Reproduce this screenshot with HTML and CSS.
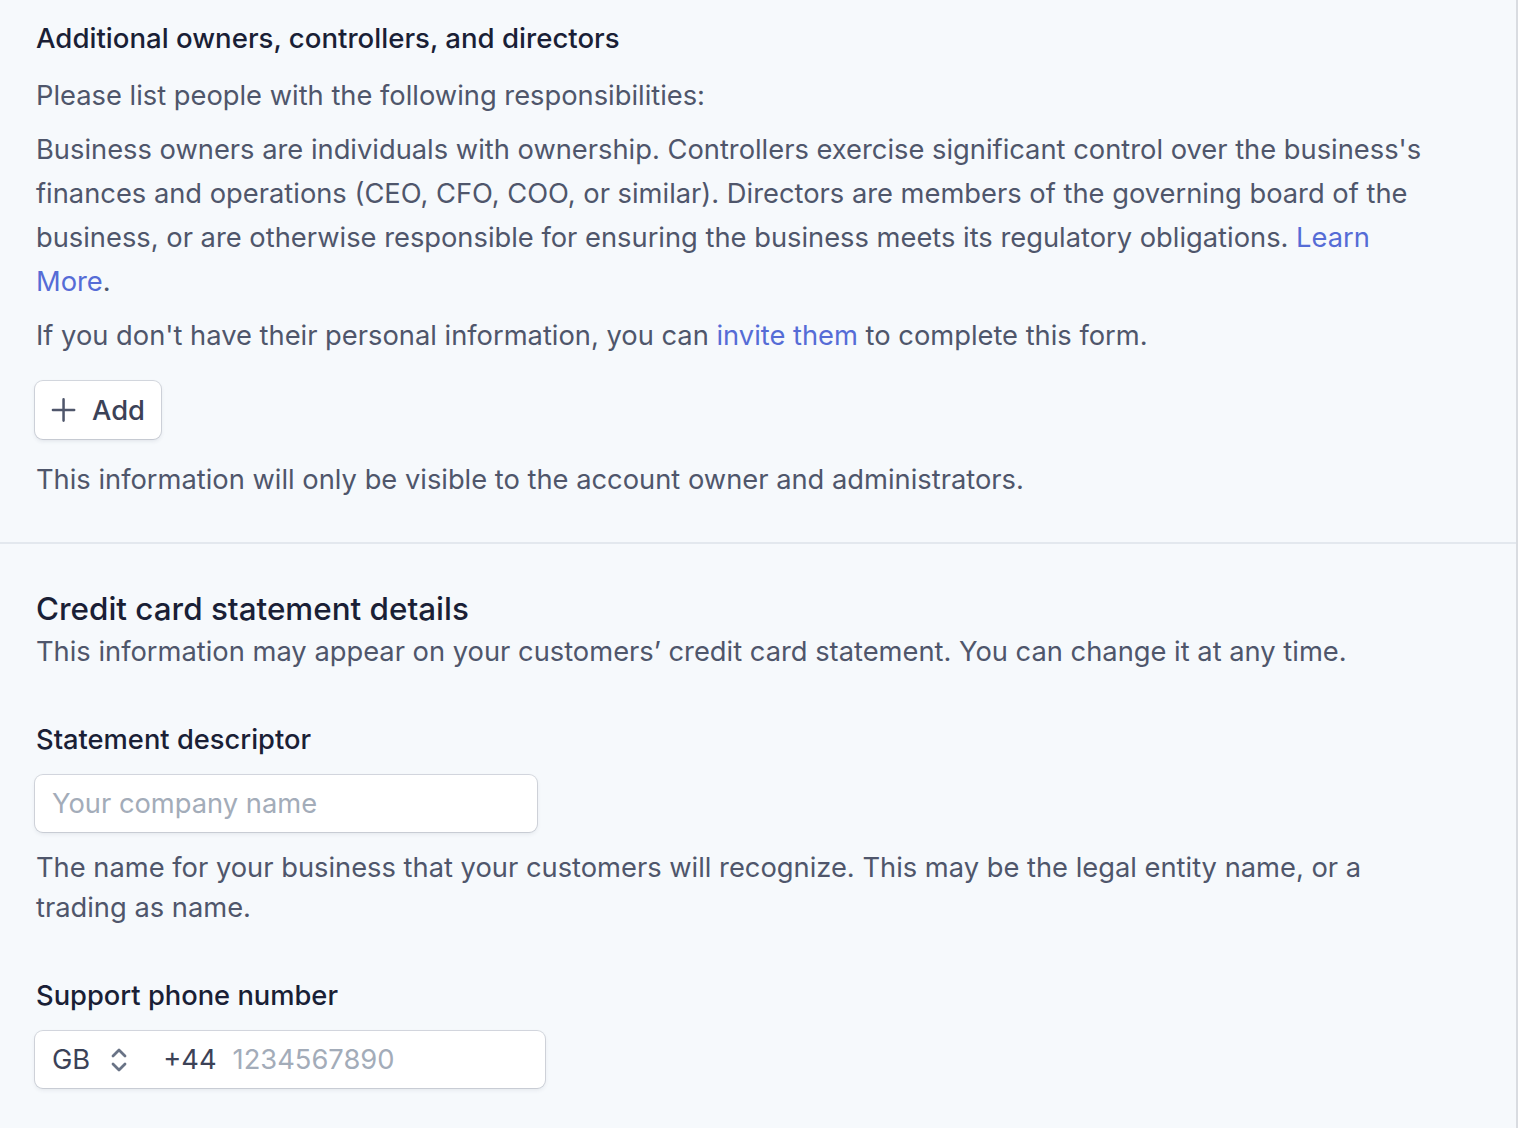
FILE: index.html
```html
<!DOCTYPE html>
<html lang="en">
<head>
<meta charset="utf-8">
<title>Account details</title>
<link rel="stylesheet" href="styles.css">
</head>
<body>
<div class="page">
  <section class="section owners">
    <h2 class="title">Additional owners, controllers, and directors</h2>
    <p class="text first">Please list people with the following responsibilities:</p>
    <p class="text">Business owners are individuals with ownership. Controllers exercise significant control over the business's finances and operations (CEO, CFO, COO, or similar). Directors are members of the governing board of the business, or are otherwise responsible for ensuring the business meets its regulatory obligations. <a class="link" href="#">Learn More</a>.</p>
    <p class="text">If you don't have their personal information, you can <a class="link" href="#">invite them</a> to complete this form.</p>
    <button class="btn" type="button">
      <svg class="plus" width="26" height="26" viewBox="0 0 26 26" aria-hidden="true"><path d="M13 2v22M2 13h22" stroke="#4f566b" stroke-width="2.6" stroke-linecap="round" fill="none"/></svg>
      <span>Add</span>
    </button>
    <p class="text note">This information will only be visible to the account owner and administrators.</p>
  </section>
  <section class="section statement">
    <h2 class="heading">Credit card statement details</h2>
    <p class="text sub">This information may appear on your customers’ credit card statement. You can change it at any time.</p>
    <div class="field">
      <label class="label" for="desc">Statement descriptor</label>
      <input id="desc" class="input desc" type="text" placeholder="Your company name">
      <p class="help">The name for your business that your customers will recognize. This may be the legal entity name, or a trading as name.</p>
    </div>
    <div class="field">
      <label class="label" for="phone">Support phone number</label>
      <div class="input phone">
        <span class="country">GB</span>
        <svg class="updown" width="20" height="28" viewBox="0 0 20 28" aria-hidden="true"><path d="M4 10l6-6 6 6M4 18l6 6 6-6" stroke="#697386" stroke-width="2.8" stroke-linecap="round" stroke-linejoin="round" fill="none"/></svg>
        <span class="code">+44</span>
        <input id="phone" class="phone-num" type="text" placeholder="1234567890">
      </div>
    </div>
  </section>
</div>
</body>
</html>
```

FILE: styles.css
```css
* { box-sizing: border-box; }
html, body { margin: 0; padding: 0; }
body {
  background: #f6f9fc;
  font-family: Inter, "Noto Sans", "Liberation Sans", sans-serif;
  color: #4f566b;
  font-size: 27.3px;
  line-height: 44px;
}
.page {
  width: 1518px;
  min-height: 1128px;
  border-right: 2px solid #d9dce1;
}
.section { padding-left: 36px; padding-right: 85px; }
.owners { padding-top: 16px; padding-bottom: 40px; border-bottom: 2px solid #e3e8ee; }
.title {
  margin: 0;
  font-size: 27.6px;
  line-height: 44px;
  font-weight: 500;
  color: #1a1f36;
}
.text { margin: 10px 0 0; }
.text.first { margin-top: 14px; }
.link { color: #556cd6; text-decoration: none; }
.btn {
  margin-top: 23px;
  margin-left: -1px;
  height: 58px;
  width: 126px;
  display: flex;
  align-items: center;
  gap: 16px;
  padding: 0 16px;
  background: #fff;
  border: none;
  border-radius: 8px;
  box-shadow: 0 0 0 1px rgba(60,66,87,.18), 0 2px 4px rgba(60,66,87,.12);
  font-family: inherit;
  font-size: 27.3px;
  font-weight: 500;
  color: #3c4257;
}
.note { margin-top: 19px; }
.statement { padding-top: 45px; }
.heading {
  margin: 0;
  font-size: 31.4px;
  line-height: 40px;
  font-weight: 500;
  color: #1a1f36;
}
.sub { margin-top: 1px; }
.field { margin-top: 44px; display: flex; flex-direction: column; align-items: flex-start; }
.field + .field { margin-top: 46px; }
.label { font-weight: 500; color: #1a1f36; line-height: 44px; }
.input {
  margin-top: 13px;
  margin-left: -1px;
  height: 57px;
  background: #fff;
  border: none;
  border-radius: 8px;
  box-shadow: 0 0 0 1px rgba(60,66,87,.18), 0 2px 4px rgba(60,66,87,.1);
  font-family: inherit;
  font-size: 27.3px;
  color: #1a1f36;
}
.desc { width: 502px; padding: 0 17px; outline: none; }
.desc::placeholder, .phone-num::placeholder { color: #a3acb9; opacity: 1; }
.help { margin: 16px 0 0; line-height: 40px; }
.phone { width: 510px; display: flex; align-items: center; padding-left: 17px; }
.country { color: #3c4257; font-weight: 400; }
.updown { margin-left: 19px; }
.code { margin-left: 34px; color: #3c4257; }
.phone-num {
  margin-left: 16px;
  border: none;
  outline: none;
  background: transparent;
  font-family: inherit;
  font-size: 27.3px;
  color: #1a1f36;
  width: 280px;
  padding: 0;
}
```
